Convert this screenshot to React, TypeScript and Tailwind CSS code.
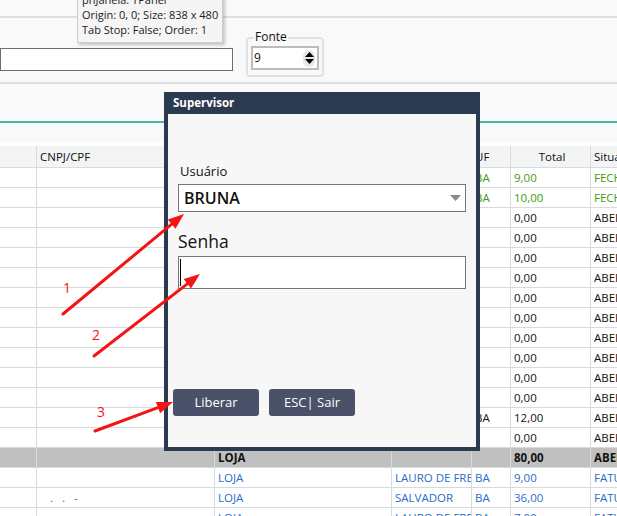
import React from 'react';

type Row = {
  cnpj?: string;
  loja?: string;
  city?: string;
  uf?: string;
  total: string;
  sit: string;
  tone: 'green' | 'black' | 'blue' | 'gray';
};

const rows: Row[] = [
  { uf: 'BA', total: '9,00', sit: 'FECHADO', tone: 'green' },
  { uf: 'BA', total: '10,00', sit: 'FECHADO', tone: 'green' },
  ...Array.from({ length: 10 }, () => ({ total: '0,00', sit: 'ABERTO', tone: 'black' as const })),
  { uf: 'BA', total: '12,00', sit: 'ABERTO', tone: 'black' },
  { total: '0,00', sit: 'ABERTO', tone: 'black' },
  { loja: 'LOJA', total: '80,00', sit: 'ABERTO', tone: 'gray' },
  { loja: 'LOJA', city: 'LAURO DE FREITAS', uf: 'BA', total: '9,00', sit: 'FATURADO', tone: 'blue' },
  { cnpj: '.   .   -', loja: 'LOJA', city: 'SALVADOR', uf: 'BA', total: '36,00', sit: 'FATURADO', tone: 'blue' },
  { loja: 'LOJA', city: 'LAURO DE FREITAS', uf: 'BA', total: '7,00', sit: 'FATURADO', tone: 'blue' },
];

const toneClass: Record<Row['tone'], string> = {
  green: 'bg-white text-[#3f9b0b]',
  black: 'bg-white text-[#111111]',
  blue: 'bg-white text-[#2a6cc8]',
  gray: 'bg-[#c0c0c0] text-[#111111] font-bold',
};

const cell = 'h-full border-r border-[#d8dbde] overflow-hidden whitespace-pre pl-[3px] flex items-center';

function Arrow({ x1, y1, x2, y2 }: { x1: number; y1: number; x2: number; y2: number }) {
  const dx = x2 - x1;
  const dy = y2 - y1;
  const L = Math.hypot(dx, dy);
  const ux = dx / L;
  const uy = dy / L;
  const hl = 16;
  const hw = 6;
  const bx = x2 - ux * hl;
  const by = y2 - uy * hl;
  const px = -uy;
  const py = ux;
  return (
    <g>
      <line x1={x1} y1={y1} x2={bx + ux * 2} y2={by + uy * 2} stroke="#f41414" strokeWidth={3} strokeLinecap="round" />
      <polygon
        points={`${x2},${y2} ${bx + px * hw},${by + py * hw} ${bx - px * hw},${by - py * hw}`}
        fill="#f41414"
      />
    </g>
  );
}

export default function App() {
  return (
    <div className="relative w-[617px] h-[516px] overflow-hidden bg-[#f9f9f9] font-['Open_Sans',sans-serif] text-[#111111]">
      <div className="h-[16px]" />
      <div className="h-[2px] bg-[#dde0e3]" />

      {/* toolbar row */}
      <div className="h-[64px] flex items-start">
        <div className="mt-[30px] w-[233px] h-[23px] bg-white border border-[#6e6e6e]" />
        <div className="relative ml-[13px] mt-[19px] w-[78px] h-[40px] rounded-[4px] border-2 border-[#dfe2e5]">
          <span className="absolute left-[6px] top-[-9px] bg-[#f9f9f9] px-[1px] text-[12px] leading-[14px]">Fonte</span>
          <div className="absolute left-[3px] top-[7px] w-[68px] h-[24px] bg-white border-2 border-[#bcbcbc] flex items-center justify-between pl-[1px] pr-[2px]">
            <span className="text-[12px] leading-none">9</span>
            <div className="w-[12px] h-[17px] rounded-full bg-[#e6e6e6] flex flex-col items-center justify-center gap-[2px]">
              <svg width="9" height="5" viewBox="0 0 9 5"><polygon points="4.5,0 9,5 0,5" fill="#000" /></svg>
              <svg width="9" height="5" viewBox="0 0 9 5"><polygon points="0,0 9,0 4.5,5" fill="#000" /></svg>
            </div>
          </div>
        </div>
      </div>
      <div className="h-[2px] bg-[#dde0e3]" />
      <div className="h-[37px]" />
      <div className="h-[2px] bg-[#42bcaa]" />
      <div className="h-[19px]" />
      <div className="h-[4px] bg-white" />

      {/* table */}
      <div className="text-[11.5px]">
        <div className="flex h-[22px] bg-[#f3f4f4] border-b border-[#d8dbde]">
          <div className={`${cell} w-[37px]`} />
          <div className={`${cell} w-[178px]`}>CNPJ/CPF</div>
          <div className={`${cell} w-[177px]`}>Loja</div>
          <div className={`${cell} w-[80px]`}>Cidade</div>
          <div className={`${cell} w-[39px]`}>UF</div>
          <div className={`${cell} w-[80px] justify-center`}>Total</div>
          <div className={`${cell} flex-1 border-r-0`}>Situação</div>
        </div>
        {rows.map((r, i) => (
          <div key={i} className={`flex h-[20px] border-b border-[#d8dbde] ${toneClass[r.tone]}`}>
            <div className={`${cell} w-[37px]`} />
            <div className={`${cell} w-[178px] pl-[13px]`}>{r.cnpj ?? ''}</div>
            <div className={`${cell} w-[177px]`}>{r.loja ?? ''}</div>
            <div className={`${cell} w-[80px]`}>{r.city ?? ''}</div>
            <div className={`${cell} w-[39px]`}>{r.uf ?? ''}</div>
            <div className={`${cell} w-[80px]`}>{r.total}</div>
            <div className={`${cell} flex-1 border-r-0`}>{r.sit}</div>
          </div>
        ))}
      </div>

      {/* tooltip */}
      <div className="absolute left-[77px] top-[-10px] w-[146px] bg-[#f5f5f5] border border-[#c9ced3] shadow-[2px_2px_3px_rgba(0,0,0,0.22)] pl-[4px] pt-[1px] pb-[5px] text-[11px] leading-[15px] text-[#222222]">
        <div>pnJanela: TPanel</div>
        <div>Origin: 0, 0; Size: 838 x 480</div>
        <div>Tab Stop: False; Order: 1</div>
      </div>

      {/* dialog */}
      <div className="absolute left-[164px] top-[92px] w-[316px] h-[359px] bg-[#2c3a50] flex flex-col">
        <div className="h-[22px] pl-[9px] flex items-center text-white font-bold text-[11.5px]">Supervisor</div>
        <div className="mx-[4px] mb-[4px] flex-1 bg-[#f7f7f7] flex flex-col">
          <div className="px-[10px] flex flex-col">
            <div className="mt-[49px] ml-[2px] text-[13px] leading-[16px] text-[#111111]">Usuário</div>
            <div className="mt-[5px] h-[28px] bg-white border border-[#767676] flex items-center justify-between pl-[5px] pr-[4px]">
              <span className="text-[16px] font-semibold text-[#111111]">BRUNA</span>
              <svg width="11" height="6" viewBox="0 0 11 6"><polygon points="0,0 11,0 5.5,6" fill="#8a8a8a" /></svg>
            </div>
            <div className="mt-[18px] text-[17.5px] leading-[22px] text-[#111111]">Senha</div>
            <div className="mt-[4px] h-[33px] bg-white border border-[#767676] flex items-center pl-[1px]">
              <div className="w-[1px] h-[27px] bg-black" />
            </div>
          </div>
          <div className="mt-[100px] pl-[5px] flex gap-[10px]">
            <button className="w-[86px] h-[27px] rounded-[3px] bg-[#4b5168] text-white text-[13px]">Liberar</button>
            <button className="w-[86px] h-[27px] rounded-[3px] bg-[#4b5168] text-white text-[13px]">ESC| Sair</button>
          </div>
        </div>
      </div>

      {/* annotations */}
      <svg className="absolute left-0 top-0 pointer-events-none" width="617" height="516" viewBox="0 0 617 516">
        <Arrow x1={63} y1={314} x2={184} y2={214} />
        <Arrow x1={94} y1={356} x2={200} y2={274} />
        <Arrow x1={95} y1={431} x2={173} y2={402} />
      </svg>
      <span className="absolute left-[63px] top-[279px] text-[14px] leading-[18px] text-[#f41414]">1</span>
      <span className="absolute left-[92px] top-[326px] text-[14px] leading-[18px] text-[#f41414]">2</span>
      <span className="absolute left-[97px] top-[403px] text-[14px] leading-[18px] text-[#f41414]">3</span>
    </div>
  );
}
